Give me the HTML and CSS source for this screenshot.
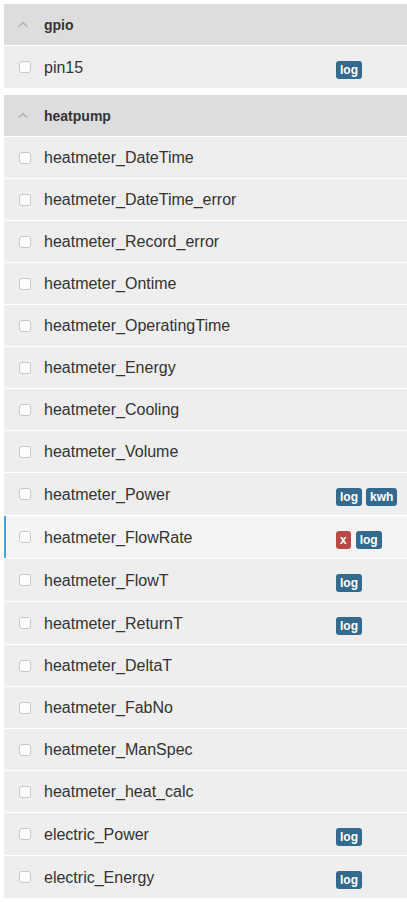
FILE: index.html
```html
<!DOCTYPE html>
<html lang="en">
<head>
  <meta charset="UTF-8">
  <title>Inputs</title>
  <link rel="stylesheet" href="styles.css">
</head>
<body>

  <div class="node">
    <div class="node-head">
      <svg class="caret" width="10" height="6" viewBox="0 0 10 6"><path d="M0 5.2 L5 0.5 L10 5.2 L8.6 6 L5 2.8 L1.4 6 Z" fill="#b3b3b3"/></svg>
      <span class="node-name">gpio</span>
    </div>
    <div class="row">
      <span class="check"></span>
      <span class="name">pin15</span>
      <span class="tags"><span class="tag">log</span></span>
    </div>
  </div>

  <div class="node">
    <div class="node-head">
      <svg class="caret" width="10" height="6" viewBox="0 0 10 6"><path d="M0 5.2 L5 0.5 L10 5.2 L8.6 6 L5 2.8 L1.4 6 Z" fill="#b3b3b3"/></svg>
      <span class="node-name">heatpump</span>
    </div>
    <div class="row"><span class="check"></span><span class="name">heatmeter_DateTime</span></div>
    <div class="row"><span class="check"></span><span class="name">heatmeter_DateTime_error</span></div>
    <div class="row"><span class="check"></span><span class="name">heatmeter_Record_error</span></div>
    <div class="row"><span class="check"></span><span class="name">heatmeter_Ontime</span></div>
    <div class="row"><span class="check"></span><span class="name">heatmeter_OperatingTime</span></div>
    <div class="row"><span class="check"></span><span class="name">heatmeter_Energy</span></div>
    <div class="row"><span class="check"></span><span class="name">heatmeter_Cooling</span></div>
    <div class="row"><span class="check"></span><span class="name">heatmeter_Volume</span></div>
    <div class="row">
      <span class="check"></span>
      <span class="name">heatmeter_Power</span>
      <span class="tags"><span class="tag">log</span><span class="tag">kwh</span></span>
    </div>
    <div class="row selected">
      <span class="check"></span>
      <span class="name">heatmeter_FlowRate</span>
      <span class="tags"><span class="tag red">x</span><span class="tag">log</span></span>
    </div>
    <div class="row">
      <span class="check"></span>
      <span class="name">heatmeter_FlowT</span>
      <span class="tags"><span class="tag">log</span></span>
    </div>
    <div class="row">
      <span class="check"></span>
      <span class="name">heatmeter_ReturnT</span>
      <span class="tags"><span class="tag">log</span></span>
    </div>
    <div class="row"><span class="check"></span><span class="name">heatmeter_DeltaT</span></div>
    <div class="row"><span class="check"></span><span class="name">heatmeter_FabNo</span></div>
    <div class="row"><span class="check"></span><span class="name">heatmeter_ManSpec</span></div>
    <div class="row"><span class="check"></span><span class="name">heatmeter_heat_calc</span></div>
    <div class="row">
      <span class="check"></span>
      <span class="name">electric_Power</span>
      <span class="tags"><span class="tag">log</span></span>
    </div>
    <div class="row">
      <span class="check"></span>
      <span class="name">electric_Energy</span>
      <span class="tags"><span class="tag">log</span></span>
    </div>
  </div>

</body>
</html>
```

FILE: styles.css
```css
body {
  margin: 0;
  padding: 4px 0 0 4px;
  background-color: #fff;
  font-family: "Liberation Sans", Arial, sans-serif;
  color: #333;
}

.node {
  margin-bottom: 6px;
}

.node-head {
  display: flex;
  align-items: center;
  height: 41px;
  background-color: #ddd;
  border-bottom: 1px solid #fff;
}

.caret {
  margin-left: 14px;
  margin-right: 16px;
  margin-top: -2px;
}

.node-name {
  font-size: 14px;
  font-weight: bold;
  margin-top: 1px;
}

.row {
  display: flex;
  align-items: center;
  padding: 12px 0;
  background-color: #eee;
  border-bottom: 1px solid #fff;
}

.row.selected {
  background-color: #f4f4f4;
  box-shadow: inset 2px 0 0 #44a3dd;
}

.check {
  width: 10px;
  height: 10px;
  margin-left: 15px;
  margin-right: 13px;
  background-color: #fff;
  border: 1px solid #c8c8c8;
  border-radius: 3px;
}

.name {
  width: 292px;
  font-size: 16px;
  line-height: 17px;
}

.tags {
  display: flex;
  gap: 4px;
  margin-top: 3px;
  margin-bottom: -3px;
}

.tag {
  display: inline-block;
  height: 18px;
  line-height: 18px;
  padding: 0 4px;
  background-color: #336a8d;
  color: #fff;
  font-size: 12px;
  font-weight: bold;
  border-radius: 3px;
}

.tag.red {
  background-color: #b94a48;
  margin-right: 1px;
}
```
